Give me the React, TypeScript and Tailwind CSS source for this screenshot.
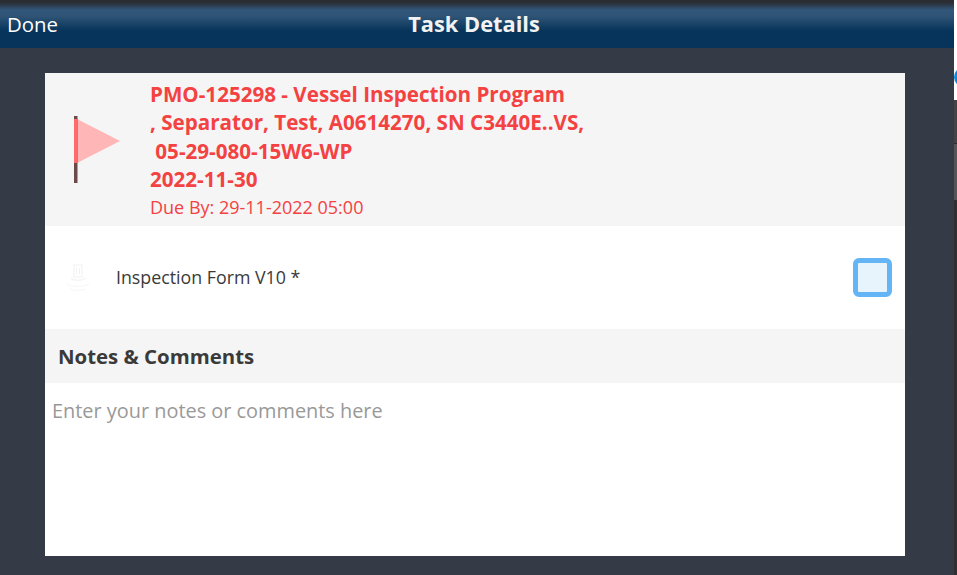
const FONT = "font-['Open_Sans',sans-serif]";

const FlagIcon = () => (
  <svg width="50" height="70" viewBox="0 0 50 70" className="shrink-0">
    <polygon points="4,3 47,25 4,47" fill="#ffb6b6" />
    <rect x="1" y="0" width="3.5" height="67" fill="#6b4a4a" />
    <rect x="1" y="3" width="3.5" height="44" fill="#ff6b6b" />
  </svg>
);

// very faint form icon, barely visible on the white row
const FormIcon = () => (
  <svg width="28" height="32" viewBox="0 0 28 32" className="shrink-0">
    <path d="M10 3h8v12H10z" fill="none" stroke="#f6f6f6" strokeWidth="1.5" />
    <path d="M12 6h1v6h-1zM15 6h1v6h-1z" fill="#f2f2f2" />
    <path d="M7 16c2 3 12 3 14 0" fill="none" stroke="#f6f6f6" strokeWidth="1.5" />
    <path d="M3 22c4 3 18 3 22 0M6 27c4 2 12 2 16 0" fill="none" stroke="#f9f9f9" strokeWidth="1.5" />
  </svg>
);

export default function App() {
  return (
    <div className={`flex h-[575px] w-[957px] overflow-hidden ${FONT}`}>
      <div className="flex w-[954px] flex-col bg-[#343b46]">
        <header className="relative flex h-12 shrink-0 items-center justify-center bg-[linear-gradient(to_bottom,#2a2c31_0px,#2a2f36_3px,#32577a_10px,#2f5476_16px,#06345a_31px,#06345a_48px)] pr-[6px]">
          <span className="absolute left-[7px] top-[9px] text-[20.4px] leading-[30px] text-white">Done</span>
          <h1 className="text-[21.8px] font-bold leading-none text-[#f2f2f2]">Task Details</h1>
        </header>

        <main className="mx-[45px] mt-[25px] flex h-[483px] w-[860px] flex-col bg-white">
          <section className="flex h-[153px] items-start bg-[#f5f5f5] pl-[28px] pt-[7px]">
            <div className="mt-[36px] w-[77px]">
              <FlagIcon />
            </div>
            <div className="text-[#f44141]">
              <p className="text-[20.6px] font-bold leading-7">PMO-125298 - Vessel Inspection Program</p>
              <p className="text-[20.6px] font-bold leading-7">, Separator, Test, A0614270, SN C3440E..VS,</p>
              <p className="mt-[1px] whitespace-pre text-[20.6px] font-bold leading-7"> 05-29-080-15W6-WP</p>
              <p className="text-[20.6px] font-bold leading-7">2022-11-30</p>
              <p className="mt-[1px] text-[18px] leading-[26px]">Due By: 29-11-2022 05:00</p>
            </div>
          </section>

          <section className="flex h-[103px] items-center pl-[19px] pr-[13px]">
            <FormIcon />
            <span className="ml-[24px] flex-1 text-[17.8px] text-[#3a3a3a]">Inspection Form V10 *</span>
            <div className="h-[39px] w-[39px] rounded-md border-[5px] border-[#64b5f6] bg-[#e8f4fc]" />
          </section>

          <section className="flex h-[54px] items-center bg-[#f5f5f5] pl-[13px]">
            <h2 className="text-[20.4px] font-bold text-[#3a3a3a]">Notes &amp; Comments</h2>
          </section>

          <textarea
            placeholder="Enter your notes or comments here"
            className="flex-1 resize-none px-[7px] pb-[12px] pt-[13px] text-[19.9px] leading-[30px] outline-none placeholder:text-[#999]"
          />
        </main>
      </div>

      <aside className="flex w-[3px] flex-col">
        <div className="flex h-[100px] items-center overflow-hidden bg-white pt-[54px]">
          <div className="h-5 w-5 shrink-0 rounded-full bg-[#0a8ddf]" />
        </div>
        <div className="h-[44px] border-b border-[#2c2c2c] bg-[#444]" />
        <div className="h-[56px] bg-[#555]" />
        <div className="flex-1 bg-[#2f2f2f]" />
      </aside>
    </div>
  );
}
